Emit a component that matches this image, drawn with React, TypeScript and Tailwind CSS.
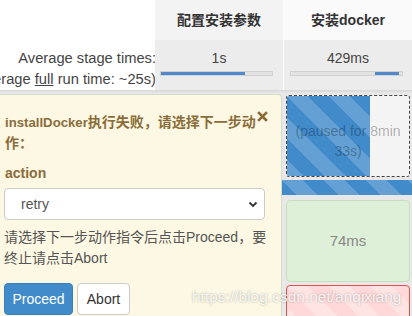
import React from 'react'

const stripes =
  'bg-[linear-gradient(45deg,rgba(255,255,255,.18)_25%,transparent_25%,transparent_50%,rgba(255,255,255,.18)_50%,rgba(255,255,255,.18)_75%,transparent_75%,transparent)] bg-[length:42px_42px]'

function CloseIcon() {
  return (
    <svg width="11" height="11" viewBox="0 0 11 11" className="text-[#8a6d3b]">
      <path d="M2 2 L9 9 M9 2 L2 9" stroke="currentColor" strokeWidth="2.6" strokeLinecap="square" />
    </svg>
  )
}

function Chevron() {
  return (
    <svg width="10" height="7" viewBox="0 0 10 7">
      <path d="M1.5 1.5 L5 5 L8.5 1.5" fill="none" stroke="#333" strokeWidth="1.8" />
    </svg>
  )
}

function InputPopup() {
  return (
    <div className="mt-px w-[282px] shrink-0 rounded-tr-[4px] border-t border-r border-[#d3dec8] bg-[#fcf8e3] pl-[4px] pt-[17px]">
      {/* title + close */}
      <div className="flex items-start">
        <div className="w-[252px] pl-px font-bold leading-[20px] text-[#8a6d3b]">
          <span className="text-[13.2px]">installDocker</span>执行失败，请选择下一步动作：
        </div>
        <button className="ml-px -mt-px">
          <CloseIcon />
        </button>
      </div>

      <div className="mt-[10px] pl-px font-bold leading-[20px] text-[#8a6d3b]">action</div>

      {/* fake select */}
      <div className="mt-[5px] flex h-[32px] w-[261px] items-center justify-between rounded-[4px] border border-[#cccccc] bg-white pl-[16px] pr-[6px] text-[#555]">
        <span>retry</span>
        <Chevron />
      </div>

      <p className="mt-[7px] w-[272px] leading-[21px] text-[#555]">
        请选择下一步动作指令后点击Proceed，要终止请点击Abort
      </p>

      <div className="mt-[14px] flex gap-[4px]">
        <button className="h-[32px] w-[69px] rounded-[4px] border border-[#3a7fbd] bg-[#428bca] text-white">
          Proceed
        </button>
        <button className="h-[32px] w-[53px] rounded-[4px] border border-[#cccccc] bg-white text-[#333]">
          Abort
        </button>
      </div>
    </div>
  )
}

export default function App() {
  return (
    <div className="relative h-[316px] w-[412px] overflow-hidden bg-white font-['Liberation_Sans','Noto_Sans_CJK_SC',sans-serif] text-[14px] text-[#333]">
      {/* stage header + averages */}
      <div className="grid grid-cols-[154px_128px_128px] gap-x-px">
        <div className="h-10" />
        <div className="flex h-10 items-center justify-center bg-[#f3f3f3] font-bold">配置安装参数</div>
        <div className="flex h-10 items-center justify-center bg-[#fafafa] font-bold">安装docker</div>

        <div className="-mr-[2px] flex h-[50px] flex-col items-end pt-[8px] text-[14.7px] leading-[21px] text-[#444]">
          <div className="whitespace-nowrap">Average stage times:</div>
          <div className="whitespace-nowrap">
            (Average <span className="underline">full</span> run time: ~25s)
          </div>
        </div>
        <div className="h-[50px] bg-[#ececec] pt-[8px]">
          <div className="text-center leading-[20px] text-[#444]">1s</div>
          <div className="ml-[5px] mt-[3px] h-[5px] w-[113px] border border-[#d2d2d2] bg-[#e2e2e2]">
            <div className="h-full w-[76%] bg-[#4f89cc]" />
          </div>
        </div>
        <div className="h-[50px] bg-[#ececec] pt-[8px]">
          <div className="text-center leading-[20px] text-[#444]">429ms</div>
          <div className="ml-[6px] mt-[3px] h-[5px] w-[113px] border border-[#d2d2d2] bg-[#e2e2e2]">
            <div className="ml-[76%] h-full w-[21%] bg-[#4f89cc]" />
          </div>
        </div>
      </div>
      <div className="h-[3px] bg-gradient-to-b from-[#d6d6d6] to-[#e8e8e8]" />

      {/* stage rows */}
      <div className="flex h-[223px] bg-[#e8e8e8]">
        <InputPopup />

        <div className="flex-1 pt-[2px]">
          <div className="relative ml-[4px] mr-[2px] h-[82px] overflow-hidden rounded-[3px] border border-dashed border-[#444] bg-[#f4f4f4]">
            <div className={`absolute inset-y-0 left-0 w-[68%] bg-[#428bca] ${stripes}`} />
            <div className="relative pt-[25px] text-center leading-[20px] text-black/30">
              (paused for 8min
              <br />
              33s)
            </div>
          </div>

          <div className={`mt-[3px] h-[15px] bg-[#428bca] ${stripes}`} />

          <div className="ml-[4px] mr-[2px] mt-[5px] flex h-[82px] items-center justify-center rounded-[4px] border border-[#c6dfbc] bg-[#dff0d8] text-[15px] text-[#888]">
            74ms
          </div>

          <div className="ml-[4px] mr-[2px] mt-[3px] h-[82px] rounded-[4px] border border-[#d9534f] bg-[#ffd9d9] bg-[linear-gradient(45deg,rgba(255,255,255,.3)_25%,transparent_25%,transparent_50%,rgba(255,255,255,.3)_50%,rgba(255,255,255,.3)_75%,transparent_75%,transparent)] bg-[length:42px_42px]" />
        </div>
      </div>

      {/* blog watermark */}
      <div className="pointer-events-none absolute left-[192px] top-[287px] whitespace-nowrap text-[15.5px] leading-[20px] text-white/85 [text-shadow:0_0_2px_rgba(0,0,0,.35)]">
        https://blog.csdn.net/anqixiang
      </div>
    </div>
  )
}
